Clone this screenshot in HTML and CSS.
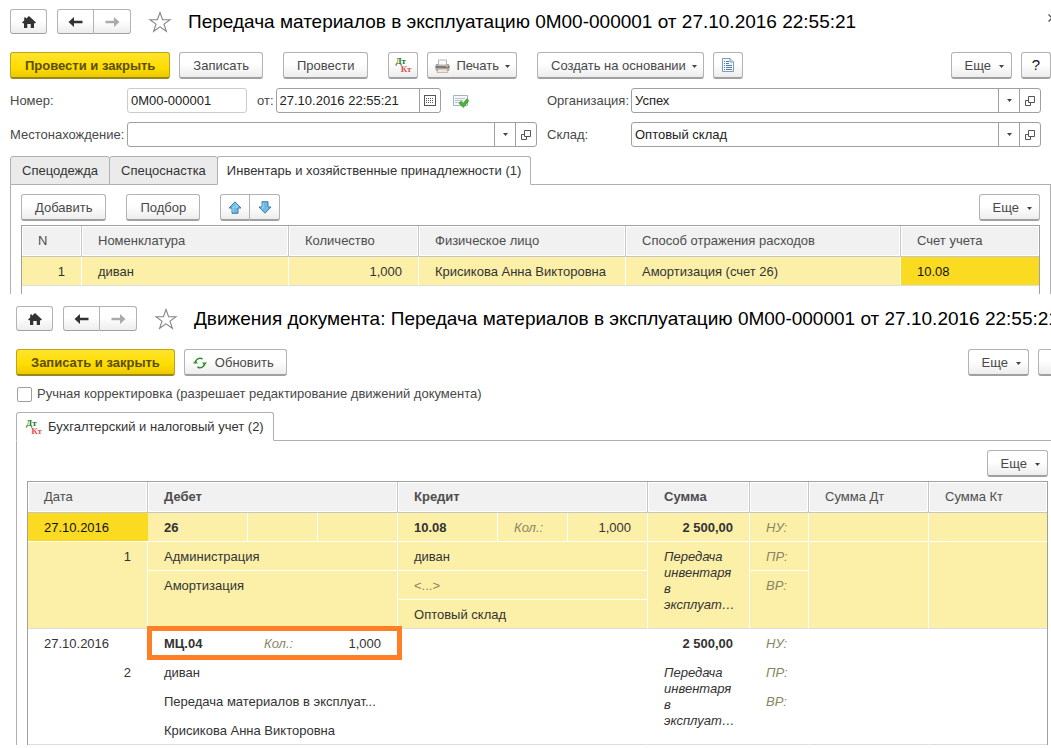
FILE: index.html
```html
<!DOCTYPE html>
<html lang="ru">
<head>
<meta charset="utf-8">
<title>Передача материалов в эксплуатацию</title>
<link rel="stylesheet" href="styles.css">
</head>
<body>
<svg class="defs" aria-hidden="true">
  <symbol id="home" viewBox="0 0 16 14"><path d="M8 1 L15 7.6 L13.9 8.6 L13 7.9 V13 H9.7 V9 H6.3 V13 H3 V7.9 L2.1 8.6 L1 7.6 L3.2 5.5 V2.5 H5 V3.8 Z" fill="#333"/></symbol>
  <symbol id="left" viewBox="0 0 15 12"><path d="M.5 6 L6 1 V4.7 H14.5 V7.3 H6 V11 Z" fill="currentColor"/></symbol>
  <symbol id="right" viewBox="0 0 15 12"><path d="M14.5 6 L9 1 V4.7 H.5 V7.3 H9 V11 Z" fill="currentColor"/></symbol>
  <symbol id="star" viewBox="0 0 24 22"><path d="M12 1.5 L14.6 8.7 H22 L16 13.1 L18.4 20.3 L12 15.9 L5.6 20.3 L8 13.1 L2 8.7 H9.4 Z" fill="#fff" stroke="#858585" stroke-width="1.1"/></symbol>
  <symbol id="down" viewBox="0 0 5 3"><path d="M0 0 H5 L2.5 3 Z" fill="#444"/></symbol>
  <symbol id="open" viewBox="0 0 10 10"><path d="M3.5 .5 H9.5 V6.5 H3.5 Z M3 4.5 H.5 V9.5 H5.5 V7" fill="none" stroke="#555"/></symbol>
</svg>

<section class="pane pane-doc">
  <header class="head">
    <button class="btn home" aria-label="Домой"><svg width="16" height="14"><use href="#home"/></svg></button>
    <div class="nav">
      <button class="btn" aria-label="Назад"><svg width="15" height="12"><use href="#left"/></svg></button>
      <button class="btn off" aria-label="Вперед"><svg width="15" height="12"><use href="#right"/></svg></button>
    </div>
    <button class="star" aria-label="В избранное"><svg width="24" height="22"><use href="#star"/></svg></button>
    <h1>Передача материалов в эксплуатацию 0М00-000001 от 27.10.2016 22:55:21</h1>
    <button class="close" aria-label="Закрыть"><svg width="8" height="8" viewBox="0 0 8 8"><path d="M.5 .5 L7.5 7.5 M7.5 .5 L.5 7.5" stroke="#555" stroke-width="1.3"/></svg></button>
  </header>

  <div class="bar">
    <div class="group">
      <button class="btn primary">Провести и закрыть</button>
      <button class="btn">Записать</button>
    </div>
    <button class="btn">Провести</button>
    <div class="group">
      <button class="btn square" aria-label="Проводки"><span class="dtkt"><b>Дт</b><i>Кт</i></span></button>
      <button class="btn print">
        <svg width="15" height="14" viewBox="0 0 15 14"><path d="M3.5 1 H11.5 V6 H3.5Z" fill="#fafafa" stroke="#b5b5b5"/><path d="M1 5 H3 L4 6.5 H11 L12 5 H14 L14.5 6.5 V11 H.5 V6.5 Z" fill="#a9a9a9"/><path d="M.5 7 H14.5 V9 H.5Z" fill="#7d7a78"/><path d="M1 10 H14 V12 H1Z" fill="#b9a68b"/><path d="M3 10 H12 L13 13.5 H2Z" fill="#eee6dc" stroke="#a79c8e" stroke-width=".6"/><path d="M11 7.5h2" stroke="#f0b050"/></svg>
        Печать<svg class="caret" width="5" height="3"><use href="#down"/></svg></button>
    </div>
    <div class="group">
      <button class="btn menu">Создать на основании<svg class="caret" width="5" height="3"><use href="#down"/></svg></button>
      <button class="btn square" aria-label="Отчет"><svg width="12" height="14" viewBox="0 0 12 14"><path d="M.5 .5 H8 L11.5 4 V13.5 H.5Z" fill="#f1f7fc" stroke="#7d9cb6"/><path d="M8 .5 V4 H11.5" fill="#cfe0ee" stroke="#7d9cb6"/><path d="M2 3.5H3M4 3.5H7M2 5.5H3M4 5.5H7M2 7.5H3M4 7.5H10M2 9.5H3M4 9.5H10M2 11.5H3M4 11.5H10" stroke="#5580a6"/></svg></button>
    </div>
    <div class="group end">
      <button class="btn menu more">Еще<svg class="caret" width="5" height="3"><use href="#down"/></svg></button>
      <button class="btn square help" aria-label="Справка">?</button>
    </div>
  </div>

  <div class="fields">
    <label for="num">Номер:</label>
    <div class="numrow">
      <input id="num" class="num" value="0М00-000001">
      <label for="date">от:</label>
      <div class="combo date"><input id="date" value="27.10.2016 22:55:21"><button aria-label="Календарь"><svg width="12" height="11" viewBox="0 0 12 11"><rect x=".5" y=".5" width="11" height="10" fill="#fff" stroke="#555"/><path d="M2 3.5H10M2 5.5H10M2 7.5H10" stroke="#555" stroke-dasharray="1 1"/></svg></button></div>
      <svg class="posted" width="16" height="14" viewBox="0 0 16 14"><path d="M.5 1.5 H14.5 V11.5 H.5Z" fill="#f3f8fb" stroke="#9fb4c4"/><path d="M2 4.5H12M2 6.5H10M2 8.5H7" stroke="#b7c7d3"/><path d="M6 9.3 L8.2 7.2 L10.3 9.2 L14 4.8 L15.8 6.6 L10.4 13.4 Z" fill="#4fb52f" stroke="#2f8a1c" stroke-width=".7"/></svg>
    </div>
    <label class="second" for="org">Организация:</label>
    <div class="combo"><input id="org" value="Успех"><button aria-label="Выбрать"><svg width="5" height="3"><use href="#down"/></svg></button><button aria-label="Открыть"><svg width="10" height="10"><use href="#open"/></svg></button></div>
    <label for="place">Местонахождение:</label>
    <div class="combo"><input id="place" value=""><button aria-label="Выбрать"><svg width="5" height="3"><use href="#down"/></svg></button><button aria-label="Открыть"><svg width="10" height="10"><use href="#open"/></svg></button></div>
    <label class="second" for="store">Склад:</label>
    <div class="combo"><input id="store" value="Оптовый склад"><button aria-label="Выбрать"><svg width="5" height="3"><use href="#down"/></svg></button><button aria-label="Открыть"><svg width="10" height="10"><use href="#open"/></svg></button></div>
  </div>

  <div class="tabs" role="tablist">
    <button class="tab" role="tab">Спецодежда</button>
    <button class="tab" role="tab">Спецоснастка</button>
    <button class="tab active" role="tab" aria-selected="true">Инвентарь и хозяйственные принадлежности (1)</button>
  </div>
  <div class="panel">
    <div class="bar">
      <button class="btn">Добавить</button>
      <button class="btn">Подбор</button>
      <div class="arrows">
        <button class="btn" aria-label="Вверх"><svg width="14" height="13" viewBox="0 0 14 13"><path d="M7 .8 L13 7 H10 V12.3 H4 V7 H1 Z" fill="#6db9e8" stroke="#3d7ba8"/><path d="M7 2.5 L10 6 H5 V11" fill="none" stroke="#a7d8f5"/></svg></button>
        <button class="btn" aria-label="Вниз"><svg width="14" height="13" viewBox="0 0 14 13"><path d="M7 12.2 L13 6 H10 V.7 H4 V6 H1 Z" fill="#6db9e8" stroke="#3d7ba8"/><path d="M5 2 V7 H3.5" fill="none" stroke="#a7d8f5"/></svg></button>
      </div>
      <button class="btn menu more end">Еще<svg class="caret" width="5" height="3"><use href="#down"/></svg></button>
    </div>
    <table class="grid items">
      <colgroup><col class="w60"><col class="w207"><col class="w130"><col class="w207"><col class="w275"><col></colgroup>
      <thead><tr><th>N</th><th>Номенклатура</th><th>Количество</th><th>Физическое лицо</th><th>Способ отражения расходов</th><th>Счет учета</th></tr></thead>
      <tbody>
        <tr class="hl last"><td class="r">1</td><td>диван</td><td class="r">1,000</td><td>Крисикова Анна Викторовна</td><td>Амортизация (счет 26)</td><td class="cur">10.08</td></tr>
      </tbody>
    </table>
  </div>
</section>

<section class="pane pane-moves">
  <header class="head">
    <button class="btn home" aria-label="Домой"><svg width="16" height="14"><use href="#home"/></svg></button>
    <div class="nav">
      <button class="btn" aria-label="Назад"><svg width="15" height="12"><use href="#left"/></svg></button>
      <button class="btn off" aria-label="Вперед"><svg width="15" height="12"><use href="#right"/></svg></button>
    </div>
    <button class="star" aria-label="В избранное"><svg width="24" height="22"><use href="#star"/></svg></button>
    <h1>Движения документа: Передача материалов в эксплуатацию 0М00-000001 от 27.10.2016 22:55:21</h1>
  </header>

  <div class="bar">
    <div class="group">
      <button class="btn primary">Записать и закрыть</button>
      <button class="btn refresh"><svg width="14" height="12" viewBox="0 0 14 12"><path d="M2.3 6 A4.7 4.7 0 0 1 9.5 2 M11.7 6 A4.7 4.7 0 0 1 4.5 10" fill="none" stroke="#2f8f2f" stroke-width="1.5"/><path d="M0 6.5 H5 L2.5 3.5 Z M9 5.5 H14 L11.5 8.5Z" fill="#2f8f2f"/></svg>Обновить</button>
    </div>
    <div class="group end">
      <button class="btn menu more">Еще<svg class="caret" width="5" height="3"><use href="#down"/></svg></button>
      <button class="btn square" aria-label="Справка"></button>
    </div>
  </div>

  <label class="check"><input type="checkbox">Ручная корректировка (разрешает редактирование движений документа)</label>

  <div class="tabs" role="tablist">
    <button class="tab active" role="tab" aria-selected="true"><span class="dtkt"><b>Дт</b><i>Кт</i></span>Бухгалтерский и налоговый учет (2)</button>
  </div>
  <div class="panel">
    <div class="bar"><button class="btn menu more end">Еще<svg class="caret" width="5" height="3"><use href="#down"/></svg></button></div>
    <table class="grid">
      <colgroup><col class="w120"><col class="w100"><col class="w70"><col class="w80"><col class="w100"><col class="w70"><col class="w80"><col class="w102"><col class="w59"><col class="w120"><col></colgroup>
      <thead><tr><th>Дата</th><th colspan="3" class="b">Дебет</th><th colspan="3" class="b">Кредит</th><th class="b">Сумма</th><th></th><th>Сумма Дт</th><th>Сумма Кт</th></tr></thead>
      <tbody class="hl">
        <tr><td class="cur">27.10.2016</td><td class="b">26</td><td></td><td></td><td class="b">10.08</td><td class="q">Кол.:</td><td class="r">1,000</td><td class="b r">2 500,00</td><td class="q">НУ:</td><td></td><td class="edge"></td></tr>
        <tr><td rowspan="3" class="r end-row">1</td><td colspan="3">Администрация</td><td colspan="3">диван</td><td rowspan="3" class="memo end-row">Передача инвентаря в эксплуат…</td><td class="q">ПР:</td><td rowspan="3" class="end-row"></td><td rowspan="3" class="edge end-row"></td></tr>
        <tr><td colspan="3" rowspan="2" class="end-row">Амортизация</td><td colspan="3" class="dim">&lt;...&gt;</td><td rowspan="2" class="q end-row">ВР:</td></tr>
        <tr><td colspan="3" class="end-row">Оптовый склад</td></tr>
      </tbody>
      <tbody>
        <tr><td>27.10.2016</td><td class="b marked">МЦ.04</td><td class="q">Кол.:</td><td class="r">1,000</td><td></td><td></td><td></td><td class="b r">2 500,00</td><td class="q">НУ:</td><td></td><td class="edge"></td></tr>
        <tr><td rowspan="3" class="r end-row">2</td><td colspan="3">диван</td><td colspan="3"></td><td rowspan="3" class="memo end-row">Передача инвентаря в эксплуат…</td><td class="q">ПР:</td><td rowspan="3" class="end-row"></td><td rowspan="3" class="edge end-row"></td></tr>
        <tr><td colspan="3">Передача материалов в эксплуат...</td><td colspan="3"></td><td rowspan="2" class="q end-row">ВР:</td></tr>
        <tr><td colspan="3" class="end-row">Крисикова Анна Викторовна</td><td colspan="3" class="end-row"></td></tr>
      </tbody>
    </table>
  </div>
</section>
</body>
</html>
```
FILE: styles.css
```css
*, *::before, *::after { box-sizing: border-box; }
body {
  margin: 0;
  background: #fff;
  color: #333;
  font: 13px/16px "Liberation Sans", Arial, sans-serif;
  overflow-x: hidden;
}
button, input { font: inherit; color: inherit; margin: 0; }
button { padding: 0; background: none; border: 0; }
svg { display: block; flex: none; }
.defs { position: absolute; width: 0; height: 0; }

.pane { overflow: hidden; }
.pane-doc { padding: 9px 0 0 10px; }
.pane-moves { padding: 12px 0 2px 16px; }

/* window header */
.head { display: flex; align-items: center; height: 25px; }
.head > * { flex: none; }
.head h1 {
  margin: 0 0 0 16px;
  font-size: 19px;
  line-height: 24px;
  font-weight: normal;
  color: #000;
  white-space: nowrap;
}
.head .btn { height: 25px; border-bottom-width: 1px; padding: 0; color: #333; }
.head .btn.off { color: #aaa; }
.btn.home { width: 37px; }
.nav { display: flex; margin: 0 17px 0 10px; }
.nav .btn { width: 37px; border-radius: 3px 0 0 3px; }
.nav .btn + .btn { border-left: 0; border-radius: 0 3px 3px 0; }
.close { margin: 0 -5px 8px auto; }

/* buttons */
.btn {
  display: inline-flex;
  align-items: center;
  justify-content: center;
  height: 27px;
  padding: 1px 13px 0;
  border: 1px solid #b3b3b3;
  border-bottom: 2px solid #a0a0a0;
  border-radius: 3px;
  background: linear-gradient(#fff 45%, #ededed);
  color: #484848;
  white-space: nowrap;
}
.btn.primary {
  padding: 1px 14px 0;
  font-weight: bold;
  color: #5a4d06;
  border-color: #bfa41a;
  border-bottom-color: #9b8717;
  background: linear-gradient(#ffe42e, #fedd00 60%, #ecc900);
}
.btn.square { width: 30px; padding: 0; flex: none; }
.btn.print { padding: 1px 6px 0 7px; gap: 6px; }
.btn.print .caret { margin-left: 0; }
.btn.menu { padding: 1px 6px 0 13px; }
.btn.more { padding-right: 7px; }
.btn.refresh { gap: 8px; padding: 1px 12px 0 8px; }
.btn.help { color: #111; font-size: 15px; }
.caret { margin: 2px 0 0 6px; }
.more .caret { margin-left: 8px; }
.end { margin-left: auto; }

.bar { display: flex; gap: 20px; }
.group { display: flex; gap: 9px; }
.pane > .bar { margin-top: 18px; }
.arrows { display: flex; }
.arrows .btn { width: 30px; padding: 0; border-radius: 3px 0 0 3px; }
.arrows .btn + .btn { border-left: 0; border-radius: 0 3px 3px 0; }

.dtkt {
  display: inline-flex;
  flex-direction: column;
  width: 16px;
  font: bold 9px/8px "Liberation Serif", serif;
}
.dtkt b { color: #2a7a1a; align-self: flex-start; }
.dtkt i { color: #e05050; font-style: normal; align-self: flex-end; }

/* form fields */
.fields {
  display: grid;
  grid-template-columns: 117px 1fr 94px 1fr;
  row-gap: 9px;
  align-items: center;
  margin: 9px 10px 0 0;
  color: #484848;
}
.second { padding-left: 10px; }
.numrow { display: flex; align-items: center; }
.numrow label { margin: 0 2px 0 10px; }
.fields input {
  width: 100%;
  min-width: 0;
  height: 23px;
  padding: 0 3px;
  border: 0;
  border-radius: 3px;
  background: transparent;
  color: #222;
}
.fields .num { width: 120px; height: 25px; border: 1px solid #ccc; }
.combo {
  display: flex;
  height: 25px;
  border: 1px solid #a0a0a0;
  border-radius: 3px;
}
.combo.date { width: 165px; }
.combo button {
  display: flex;
  flex: none;
  align-items: center;
  justify-content: center;
  width: 21px;
  border-left: 1px solid #a0a0a0;
}
.posted { margin-left: 12px; }

/* tabs */
.tabs { display: flex; margin-top: 9px; }
.tab {
  display: flex;
  align-items: center;
  height: 29px;
  padding: 0 11px;
  margin: 0 0 -1px -1px;
  border: 1px solid #b0b0b0;
  border-radius: 3px 3px 0 0;
  background: #ebebeb;
  color: #333;
}
.tab:first-child { margin-left: 0; }
.tab.active { position: relative; background: #fff; border-bottom-color: #fff; padding: 0 9px; }
.tab .dtkt { margin-right: 6px; }
.panel { border: 1px solid #b0b0b0; border-bottom: 0; }
.pane-doc .panel { padding: 9px 10px 0; }
.pane-moves .panel { padding: 9px 3px 0 10px; border-right: 0; }
.pane-moves .tabs { margin-top: 10px; }
.panel .bar { margin-bottom: 4px; }

/* tables */
.grid {
  width: 100%;
  table-layout: fixed;
  border: 1px solid #a0a0a0;
  border-bottom: 0;
  border-collapse: separate;
  border-spacing: 0;
}
.grid th, .grid td {
  height: 29px;
  padding: 7px 16px 5px;
  border-right: 1px solid #fff;
  border-bottom: 1px solid #fff;
  text-align: left;
  vertical-align: top;
  white-space: nowrap;
}
.grid th {
  height: 31px;
  background: #f1f1f1;
  color: #4d4d4d;
  font-weight: normal;
  border-color: #c6c6c6;
  box-shadow: inset 0 0 0 1px #fff;
}
.grid th:last-child, .grid .edge, .grid td.cur { border-right: 0; }
.grid .b { font-weight: bold; }
.grid .r { text-align: right; }
.grid .q { color: #8a8560; font-style: italic; }
.grid .dim { color: #8a8560; }
.grid .memo { font-style: italic; white-space: normal; padding-right: 12px; }
.hl td { background: #fcf0a8; }
.grid .cur { background: #fadb21; color: #111; }
.grid .end-row, .grid .last td { border-bottom-color: #ddd; }
.items::after { content: ""; display: block; height: 8px; }
.marked { position: relative; }
.marked::after {
  content: "";
  position: absolute;
  top: -3px;
  left: -1px;
  width: 255px;
  height: 34px;
  border: 5px solid #ff7f27;
}
.w59 { width: 59px; }
.w60 { width: 60px; }
.w70 { width: 70px; }
.w80 { width: 80px; }
.w100 { width: 100px; }
.w102 { width: 102px; }
.w120 { width: 120px; }
.w130 { width: 130px; }
.w207 { width: 207px; }
.w275 { width: 275px; }

/* checkbox */
.check { display: flex; align-items: center; gap: 5px; margin-top: 10px; color: #484848; }
.check input {
  appearance: none;
  width: 15px;
  height: 15px;
  margin-left: 1px;
  border: 1px solid #a0a0a0;
  border-radius: 2px;
}
.pane-moves > .bar { margin-right: -17px; }
```
